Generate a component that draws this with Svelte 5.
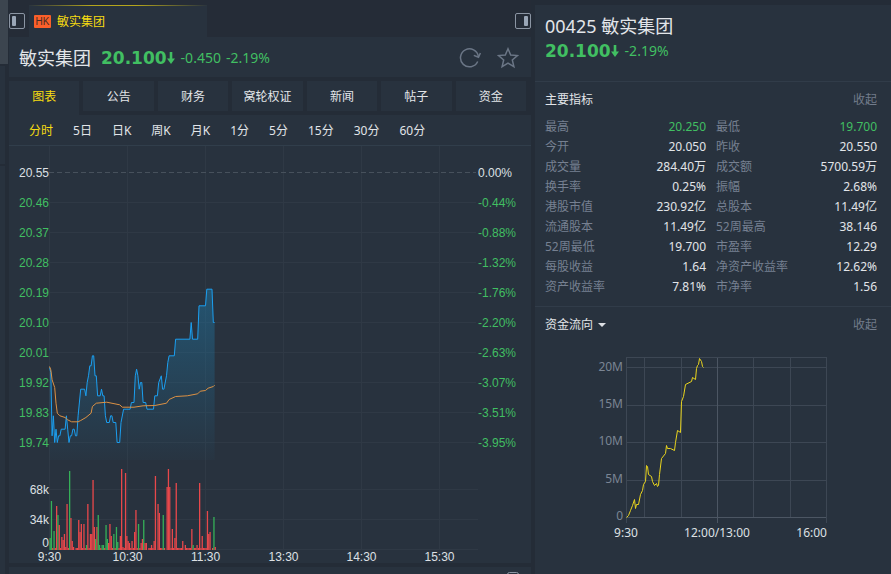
<script lang="ts">
  type Point = [number, number]

  const tabs = ['图表', '公告', '财务', '窝轮权证', '新闻', '帖子', '资金']
  const periods = ['分时', '5日', '日K', '周K', '月K', '1分', '5分', '15分', '30分', '60分']

  const metrics = [
    { label: '最高', value: '20.250', down: true },
    { label: '最低', value: '19.700', down: true },
    { label: '今开', value: '20.050' },
    { label: '昨收', value: '20.550' },
    { label: '成交量', value: '284.40万' },
    { label: '成交额', value: '5700.59万' },
    { label: '换手率', value: '0.25%' },
    { label: '振幅', value: '2.68%' },
    { label: '港股市值', value: '230.92亿' },
    { label: '总股本', value: '11.49亿' },
    { label: '流通股本', value: '11.49亿' },
    { label: '52周最高', value: '38.146' },
    { label: '52周最低', value: '19.700' },
    { label: '市盈率', value: '12.29' },
    { label: '每股收益', value: '1.64' },
    { label: '净资产收益率', value: '12.62%' },
    { label: '资产收益率', value: '7.81%' },
    { label: '市净率', value: '1.56' },
  ]

  const levels = [
    ['20.55', '0.00%'],
    ['20.46', '-0.44%'],
    ['20.37', '-0.88%'],
    ['20.28', '-1.32%'],
    ['20.19', '-1.76%'],
    ['20.10', '-2.20%'],
    ['20.01', '-2.63%'],
    ['19.92', '-3.07%'],
    ['19.83', '-3.51%'],
    ['19.74', '-3.95%'],
  ]
  const times = ['9:30', '10:30', '11:30', '13:30', '14:30', '15:30']

  // [minute since open, price]
  const prices: Point[] = [
    [0, 19.965], [1, 19.95], [2, 19.76], [3, 19.82], [4, 19.74], [5, 19.78], [6, 19.74], [7, 19.76],
    [8, 19.76], [9, 19.78], [12, 19.78], [13, 19.82], [14, 19.78], [15, 19.74], [16, 19.76], [17, 19.76],
    [18, 19.78], [19, 19.78], [20, 19.76], [21, 19.76], [22, 19.82], [24, 19.9], [27, 19.9], [28, 19.88],
    [29, 19.92], [30, 19.94], [31, 19.97], [32, 19.97], [33, 20], [34, 20], [35, 19.94], [36, 19.94],
    [37, 19.88], [39, 19.88], [40, 19.9], [41, 19.88], [42, 19.88], [43, 19.82], [44, 19.8], [46, 19.8],
    [47, 19.82], [48, 19.82], [49, 19.8], [51, 19.8], [52, 19.74], [54, 19.74], [55, 19.8], [57, 19.84],
    [62, 19.84], [63, 19.86], [65, 19.86], [66, 19.94], [67, 19.96], [68, 19.94], [69, 19.9], [70, 19.92],
    [71, 19.92], [72, 19.86], [74, 19.86], [75, 19.84], [80, 19.84], [81, 19.88], [83, 19.88], [84, 19.92],
    [86, 19.94], [87, 19.9], [88, 19.9], [90, 19.94], [91, 19.98], [92, 20], [96, 20], [97, 20.05],
    [108, 20.05], [109, 20.1], [110, 20.05], [114, 20.05], [115, 20.15], [120, 20.15], [121, 20.2],
    [125, 20.2], [126, 20.1], [127, 20.1],
  ]
  const average: Point[] = [
    [0, 19.968], [1, 19.958], [2, 19.928], [4, 19.905], [5, 19.858], [6, 19.828], [8, 19.82], [12, 19.815],
    [14, 19.808], [17, 19.802], [22, 19.802], [24, 19.806], [28, 19.815], [32, 19.828], [33, 19.848],
    [36, 19.858], [44, 19.861], [54, 19.853], [56, 19.846], [65, 19.846], [72, 19.85], [81, 19.851],
    [90, 19.858], [92, 19.869], [97, 19.878], [106, 19.88], [114, 19.886], [116, 19.894], [120, 19.896],
    [122, 19.903], [126, 19.908], [127, 19.912],
  ]

  // minute: bar height, negative for a falling minute
  const volumes: Record<number, number> = {
    0: -12, 1: -49, 3: -19, 5: 44, 6: -35, 7: 25, 9: 13, 10: 10, 11: 16, 12: 3, 13: 46, 15: -79, 16: 32,
    17: 9, 18: 3, 22: 30, 23: 18, 24: 26, 26: 26, 28: -5, 29: 46, 31: 16, 32: 16, 33: 70, 34: 23, 35: -11,
    36: 23, 37: -35, 38: -5, 40: -5, 41: -5, 43: -25, 44: -11, 45: 7, 46: 26, 47: 14, 49: -16, 51: -23,
    52: -8, 54: 14, 55: 81, 56: 3, 58: 77, 59: 14, 60: 9, 61: 7, 63: 9, 65: 18, 66: 40, 68: -26, 70: 7,
    71: 11, 72: -30, 73: 7, 74: 7, 78: 5, 80: 9, 81: 74, 83: 46, 84: 37, 87: -35, 90: 63, 91: 81, 92: 63,
    94: 21, 96: 12, 97: 67, 102: 9, 104: 5, 109: 21, 110: -5, 113: 5, 115: 67, 117: 14, 121: 39, 122: 16,
    123: 18, 126: -33, 127: 3,
  }
  const bars = Array.from({ length: 128 }, (_, minute) => ({
    minute,
    height: Math.abs(volumes[minute] ?? (minute % 7 === 5 ? 0 : 2)),
    down: (volumes[minute] ?? 1) < 0,
  }))

  const flow: Point[] = [
    [0, 0], [2, 2], [4, 7], [6, 12], [8, 18], [9, 9], [10, 13], [12, 13], [14, 23], [16, 27], [17, 33],
    [19, 36], [20, 52], [21, 51], [22, 43], [25, 41], [26, 36], [28, 32], [30, 34], [31, 31], [32, 32],
    [33, 43], [35, 59], [39, 64], [40, 72], [41, 69], [44, 69], [48, 67], [49, 75], [51, 87], [54, 85],
    [55, 116], [57, 121], [59, 133], [65, 136], [66, 140], [69, 138], [70, 149], [71, 152], [72, 153],
    [73, 159], [75, 156], [76, 151], [77, 150],
  ]
  const flowRows = ['20M', '15M', '10M', '5M', '0']
  const flowColumns = [18, 55, 127, 164]

  const timeX = (minute: number) => 40.5 + minute * 1.3
  const priceY = (price: number) => 26.5 + ((20.55 - price) * 1000) / 3

  const toLine = (points: Point[]) => points.map(([m, p]) => `${timeX(m).toFixed(1)},${priceY(p).toFixed(1)}`).join(' ')

  const priceLine = toLine(prices)
  const averageLine = toLine(average)
  const flowLine = flow.map(([x, y]) => `${91.5 + x},${176.5 - y}`).join(' ')

  let activeTab = $state('图表')
  let activePeriod = $state('分时')
  let metricsOpen = $state(true)
  let flowOpen = $state(true)
</script>

{#snippet arrow()}
  <svg class="arrow" viewBox="0 0 8 12" aria-hidden="true">
    <path d="M2.7 0h2.6v6.4H8L4 12 0 6.4h2.7z" />
  </svg>
{/snippet}

<div class="app">
  <div class="rail">
    <div class="thumb"></div>
    <div class="rail-top"></div>
    <div class="rail-rest"></div>
  </div>

  <main>
    <div class="strip">
      <button class="layout-button" aria-label="左侧栏">
        <svg viewBox="0 0 16 16" aria-hidden="true">
          <rect x="0.5" y="0.5" width="15" height="15" rx="1.5" />
          <rect class="solid" x="3" y="3" width="4" height="10" rx="1" />
        </svg>
      </button>
      <a class="stock-tab" href="#00425"><span class="market">HK</span>敏实集团</a>
      <button class="layout-button" aria-label="右侧栏">
        <svg viewBox="0 0 16 16" aria-hidden="true">
          <rect x="0.5" y="0.5" width="15" height="15" rx="1.5" />
          <rect class="solid" x="9" y="3" width="4" height="10" rx="1" />
        </svg>
      </button>
    </div>

    <header class="quote">
      <h1>敏实集团</h1>
      <strong>20.100</strong>
      {@render arrow()}
      <span class="change">-0.450</span>
      <span class="change">-2.19%</span>
      <div class="actions">
        <button aria-label="刷新">
          <svg viewBox="0 0 22 22" aria-hidden="true">
            <path d="M18.7 14.5A9 9 0 1 1 19.4 9.6" />
            <path d="M14.8 8.4l4.7 1.9 1.9-4.2" />
          </svg>
        </button>
        <button aria-label="收藏">
          <svg viewBox="0 0 22 22" aria-hidden="true">
            <path d="M11 1.800l2.7 6.2 6.8.6-5.2 4.4 1.6 6.7-5.9-3.5-5.9 3.5 1.6-6.7L1.500 8.600l6.8-.6z" />
          </svg>
        </button>
      </div>
    </header>

    <nav class="tabs">
      {#each tabs as tab}
        <button class:active={tab === activeTab} onclick={() => (activeTab = tab)}>{tab}</button>
      {/each}
    </nav>

    <div class="periods">
      {#each periods as period}
        <button class:active={period === activePeriod} onclick={() => (activePeriod = period)}>{period}</button>
      {/each}
    </div>

    <section class="chart">
      <svg viewBox="0 0 522 417" role="img" aria-label="分时">
        <defs>
          <linearGradient id="area" x1="0" y1="0" x2="0" y2="1">
            <stop offset="0" stop-color="#1f7fb0" stop-opacity="0.45" />
            <stop offset="1" stop-color="#1f7fb0" stop-opacity="0.03" />
          </linearGradient>
        </defs>

        {#each times as time, i}
          <line class="grid" x1={40.5 + i * 78} x2={40.5 + i * 78} y1="0" y2="404" />
          <text class="time" x={40.5 + i * 78} y="415">{time}</text>
        {/each}

        {#each levels as [price, percent], i}
          <line class={i === 0 ? 'previous' : 'grid'} x1="40" x2="467" y1={26.5 + i * 30} y2={26.5 + i * 30} />
          <text class="price" class:flat={i === 0} x="40" y={31 + i * 30}>{price}</text>
          <text class="percent" class:flat={i === 0} x="469" y={31 + i * 30}>{percent}</text>
        {/each}

        <polygon fill="url(#area)" points="40.5,314 {priceLine} 205.6,314" />
        <polyline class="price-line" points={priceLine} />
        <polyline class="average-line" points={averageLine} />

        {#each ['68k', '34k', '0'] as label, i}
          <line class="grid" x1="40" x2="469" y1={343.5 + i * 30} y2={343.5 + i * 30} />
          <text class="volume" x="40" y={i === 2 ? 401 : 348 + i * 30}>{label}</text>
        {/each}
        {#each bars as bar}
          <rect class="bar" class:down={bar.down} x={timeX(bar.minute)} y={404 - bar.height} width="1.3" height={bar.height} />
        {/each}
      </svg>
    </section>

    <footer class="next-panel">
      <button class="layout-button" aria-label="展开">
        <svg viewBox="0 0 16 16" aria-hidden="true">
          <rect x="2.5" y="0.5" width="11" height="11" rx="2" />
        </svg>
      </button>
    </footer>
  </main>

  <aside>
    <header class="summary">
      <h2>00425 敏实集团</h2>
      <div class="summary-price">
        <strong>20.100</strong>
        {@render arrow()}
        <span class="change">-2.19%</span>
      </div>
    </header>

    <section class="metrics">
      <div class="section-title">
        <h3>主要指标</h3>
        <button onclick={() => (metricsOpen = !metricsOpen)}>收起</button>
      </div>
      {#if metricsOpen}
        <dl>
          {#each metrics as { label, value, down }}
            <div>
              <dt>{label}</dt>
              <dd class:down>{value}</dd>
            </div>
          {/each}
        </dl>
      {/if}
    </section>

    <section class="flow">
      <div class="section-title">
        <h3>
          <button class="flow-menu">资金流向<span class="caret"></span></button>
        </h3>
        <button onclick={() => (flowOpen = !flowOpen)}>收起</button>
      </div>
      {#if flowOpen}
        <svg viewBox="0 0 356 204" role="img" aria-label="资金流向">
          <line class="flow-grid" x1="91" x2="292" y1="16.5" y2="16.5" />
          {#each flowRows as label, i}
            <line class="flow-grid" class:base={i === 4} x1="91" x2="292" y1={Math.round(26 + i * 37.5) + 0.5} y2={Math.round(26 + i * 37.5) + 0.5} />
            <text class="flow-value" x="88" y={Math.floor(30 + i * 37.4)}>{label}</text>
          {/each}
          {#each flowColumns as x}
            <line class="flow-grid" x1={91.5 + x} x2={91.5 + x} y1="17" y2="176" />
          {/each}
          {#each [0, 91, 200] as x}
            <line class="flow-grid" class:middle={x === 91} x1={91.5 + x} x2={91.5 + x} y1="17" y2="182" />
          {/each}
          <polyline class="flow-line" points={flowLine} />
          <text class="flow-time" x="91" y="196">9:30</text>
          <text class="flow-time" x="182" y="196">12:00/13:00</text>
          <text class="flow-time last" x="292" y="196">16:00</text>
        </svg>
      {/if}
    </section>
  </aside>
</div>

<style>
  :global(body) {
    background: #242c37;
  }

  .app {
    display: grid;
    grid-template-columns: 9px minmax(0, 1fr) 356px;
    height: 100vh;
    overflow: hidden;
    color: #e2e5e9;
    font-family: 'Noto Sans', 'Noto Sans CJK SC', sans-serif;
    font-size: 12px;
    line-height: 20px;
  }

  h1,
  h2,
  h3,
  dl,
  dd {
    margin: 0;
    font-weight: 400;
  }

  h3 {
    font-size: 12px;
  }

  button {
    padding: 0;
    border: 0;
    background: none;
    color: inherit;
    font: inherit;
    cursor: pointer;
  }

  svg {
    display: block;
  }

  .rail {
    display: flex;
    flex-direction: column;
    gap: 2px;
  }

  .thumb {
    width: 8px;
    height: 64px;
    background: #3c454f;
  }

  .rail-top,
  .rail-rest {
    width: 5px;
    background: #28323e;
  }

  .rail-top {
    height: 98px;
  }

  .rail-rest {
    flex: 1;
  }

  main {
    display: flex;
    flex-direction: column;
    min-width: 0;
    margin-right: 4px;
  }

  .strip {
    display: flex;
    align-items: center;
    flex: none;
    height: 32px;
    padding-top: 5px;
    background: #252c37;
  }

  .layout-button svg {
    width: 16px;
    height: 16px;
    fill: none;
    stroke: #8b95a3;
  }

  .layout-button .solid {
    fill: #9aa6b6;
    stroke: none;
  }

  .stock-tab {
    display: flex;
    align-items: center;
    gap: 6px;
    box-sizing: border-box;
    width: 178px;
    height: 32px;
    margin: 0 auto 0 4px;
    padding-left: 5px;
    border-top: 1px solid;
    border-image: linear-gradient(90deg, #28323e, #b5a51c 35%, #b5a51c 60%, #28323e) 1;
    background: #28323e;
    color: #f7dc10;
    text-decoration: none;
  }

  .market {
    width: 17px;
    background: #fa5f2a;
    border-radius: 1px;
    color: #4a2c24;
    font-family: 'Liberation Sans', sans-serif;
    font-size: 10px;
    line-height: 13px;
    text-align: center;
  }

  .quote {
    display: flex;
    align-items: center;
    flex: none;
    box-sizing: border-box;
    height: 40px;
    padding: 2px 12px 0 10px;
    background: #28323e;
  }

  h1,
  h2 {
    font-size: 18px;
    line-height: 26px;
  }

  .quote h1 {
    margin-right: 10px;
  }

  strong {
    color: #41bf62;
    font-family: 'DejaVu Sans', sans-serif;
    font-size: 17px;
    line-height: 24px;
  }

  .arrow {
    width: 8px;
    height: 12px;
    margin-right: 6px;
    fill: #41bf62;
  }

  .change {
    color: #41bf62;
    font-size: 14px;
  }

  .change + .change {
    margin-left: 5px;
  }

  .actions {
    display: flex;
    gap: 16px;
    margin-left: auto;
  }

  .actions svg {
    width: 22px;
    height: 22px;
    fill: none;
    stroke: #6b7686;
    stroke-width: 1.5;
  }

  .tabs {
    display: grid;
    grid-template-columns: repeat(7, 1fr);
    gap: 4px;
    flex: none;
    height: 34px;
    padding: 4px 5px 0 0;
  }

  .tabs button {
    height: 30px;
    padding-top: 2px;
    background: #28323e;
  }

  .tabs .active {
    height: 34px;
    padding: 0 0 2px;
  }

  .active {
    color: #f7dc10;
  }

  .periods {
    display: flex;
    gap: 20px;
    flex: none;
    box-sizing: border-box;
    height: 31px;
    padding: 2px 0 0 20px;
    border-bottom: 1px solid #313e4b;
    background: #28323e;
  }

  .chart {
    flex: none;
    margin-bottom: 4px;
    background: #28323e;
  }

  .chart svg {
    width: 100%;
    font-family: 'Liberation Sans', sans-serif;
    font-size: 12px;
  }

  .grid {
    stroke: #2f3945;
  }

  .previous {
    stroke: #47515c;
    stroke-dasharray: 5 3;
  }

  .time {
    fill: #dde0e4;
    text-anchor: middle;
  }

  .price {
    fill: #41bf62;
    text-anchor: end;
  }

  .percent {
    fill: #41bf62;
  }

  .volume {
    fill: #dde0e4;
    text-anchor: end;
  }

  .flat {
    fill: #dde0e4;
  }

  .price-line,
  .average-line,
  .flow-line {
    fill: none;
    stroke-width: 1;
  }

  .price-line {
    stroke: #1b9ff0;
  }

  .average-line {
    stroke: #dc9144;
  }

  .bar {
    fill: #e8484b;
  }

  .bar.down {
    fill: #35b058;
  }

  .next-panel {
    display: flex;
    justify-content: flex-end;
    align-items: flex-start;
    flex: 1;
    padding: 5px 10px 0;
    background: #28323e;
  }

  aside {
    min-width: 0;
    border-top: 5px solid #242c37;
    background: #28323e;
  }

  .summary {
    box-sizing: border-box;
    height: 77px;
    padding: 8px 10px 0;
    border-bottom: 1px solid #313c49;
  }

  .summary-price {
    display: flex;
    align-items: center;
  }

  .metrics {
    padding: 8px 14px 9px 10px;
    border-bottom: 1px solid #313c49;
  }

  .section-title {
    display: flex;
    justify-content: space-between;
  }

  .section-title > button {
    color: #727c8b;
  }

  dl {
    display: grid;
    grid-template-columns: 1fr 1fr;
    column-gap: 10px;
    margin-top: 7px;
  }

  dl div {
    display: flex;
    justify-content: space-between;
  }

  dt {
    color: #768091;
  }

  .down {
    color: #41bf62;
  }

  .flow .section-title {
    padding: 8px 14px 6px 10px;
  }

  .flow-menu {
    display: flex;
    align-items: center;
    gap: 5px;
  }

  .caret {
    border: 4px solid transparent;
    border-top-color: #dde0e4;
    border-bottom: 0;
  }

  .flow svg {
    width: 100%;
    font-size: 12px;
  }

  .flow-grid {
    stroke: #3d4754;
  }

  .flow-grid.base,
  .flow-grid.middle {
    stroke: #4c5663;
  }

  .flow-line {
    stroke: #ead51e;
  }

  .flow-value {
    fill: #7b8594;
    text-anchor: end;
  }

  .flow-time {
    fill: #dde0e4;
    text-anchor: middle;
  }

  .flow-time.last {
    text-anchor: end;
  }
</style>
